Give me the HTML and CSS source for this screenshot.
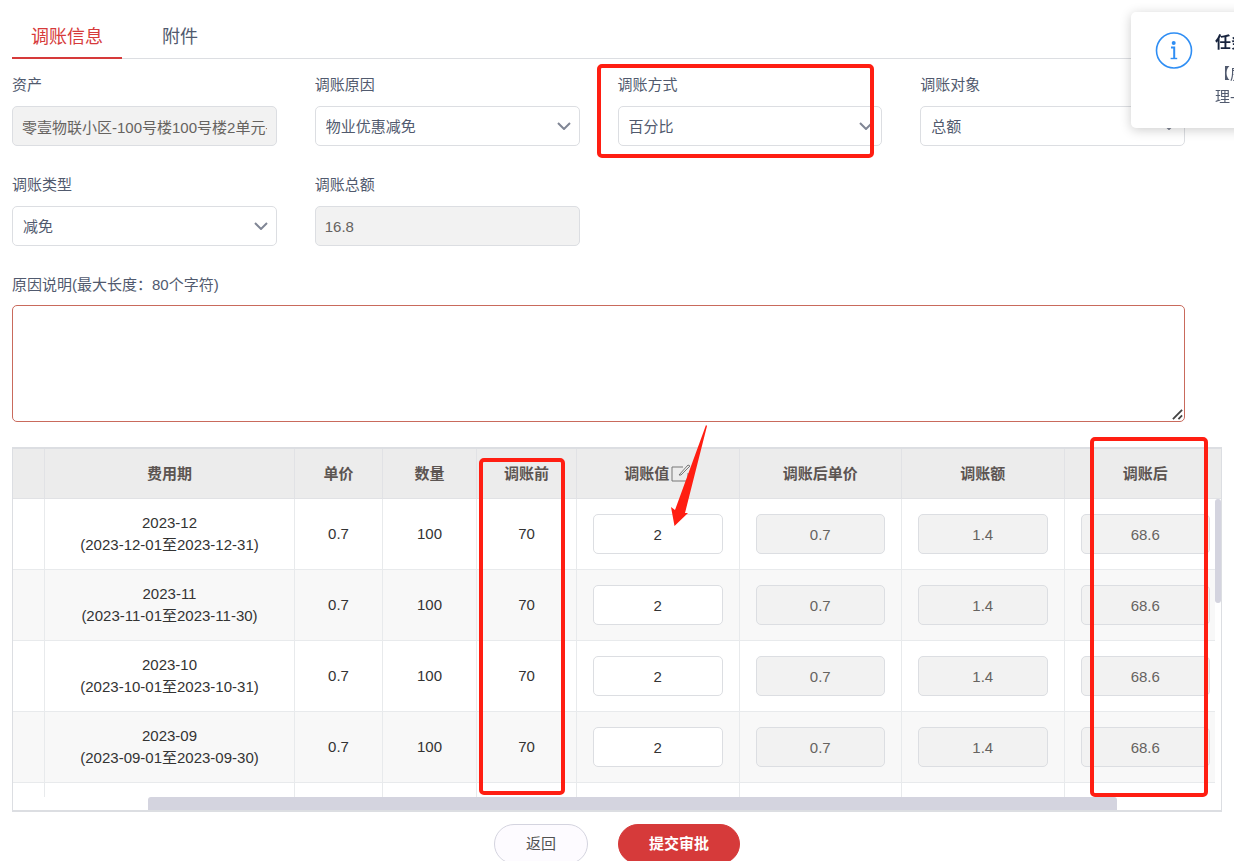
FILE: index.html
```
<!DOCTYPE html>
<html lang="zh-CN">
<head>
  <meta charset="UTF-8">
  <title>调账信息</title>
  <link rel="stylesheet" href="styles.css">
</head>
<body>
  <nav class="tabs">
    <a class="tab active" href="#info">调账信息</a>
    <a class="tab" href="#files">附件</a>
  </nav>

  <form class="form" id="info">
    <div class="field">
      <label for="asset">资产</label>
      <input id="asset" type="text" value="零壹物联小区-100号楼100号楼2单元-101" disabled>
    </div>
    <div class="field">
      <label for="reason">调账原因</label>
      <select id="reason"><option>物业优惠减免</option></select>
    </div>
    <div class="field">
      <label for="mode">调账方式</label>
      <select id="mode"><option>百分比</option></select>
    </div>
    <div class="field">
      <label for="target">调账对象</label>
      <select id="target"><option>总额</option></select>
    </div>
    <div class="field">
      <label for="type">调账类型</label>
      <select id="type"><option>减免</option></select>
    </div>
    <div class="field">
      <label for="total">调账总额</label>
      <input id="total" type="text" value="16.8" disabled>
    </div>
    <div class="field wide">
      <label for="remark">原因说明(最大长度：80个字符)</label>
      <div class="remark">
        <textarea id="remark" maxlength="80"></textarea>
        <svg class="grip" viewBox="0 0 12 12"><path d="M1 11L11 1M7 11L11 7"/></svg>
      </div>
    </div>
  </form>

  <div class="grid">
    <div class="grid-body">
      <table>
        <colgroup>
          <col class="c-check"><col class="c-period"><col class="c-price"><col class="c-count"><col class="c-before">
          <col class="c-input"><col class="c-input"><col class="c-input"><col class="c-input">
        </colgroup>
        <thead>
          <tr>
            <th></th>
            <th>费用期</th>
            <th>单价</th>
            <th>数量</th>
            <th>调账前</th>
            <th>
              <span class="editable">调账值<svg class="edit" viewBox="0 0 20 18"><path d="M12 3H1V17H17V9"/><path d="M8 11L17 1L19 2L10 11Z"/></svg></span>
            </th>
            <th>调账后单价</th>
            <th>调账额</th>
            <th>调账后</th>
          </tr>
        </thead>
        <tbody id="rows"></tbody>
      </table>
    </div>
    <div class="track-y"><div class="thumb-y"></div></div>
    <div class="track-x"><div class="thumb-x"></div></div>
  </div>

  <div class="actions">
    <button class="btn" type="button">返回</button>
    <button class="btn primary" type="button">提交审批</button>
  </div>

  <aside class="notice">
    <svg class="notice-icon" viewBox="0 0 38 38">
      <circle cx="19" cy="18.500" r="17.5" fill="none" stroke="#2f8ef4" stroke-width="1.6"/>
      <circle cx="18.7" cy="11" r="2" fill="#2f8ef4"/>
      <path d="M16 15.500h3.200v10.6" fill="none" stroke="#2f8ef4" stroke-width="2"/>
      <path d="M15.600 26.500h6.600" fill="none" stroke="#2f8ef4" stroke-width="1.4"/>
    </svg>
    <div>
      <h2>任务提醒</h2>
      <p>【房产管理】<br>理-调账</p>
    </div>
  </aside>

  <!-- marks over the page -->
  <svg class="marks" width="1234" height="861">
    <rect x="599" y="66" width="273" height="90" rx="3"/>
    <rect x="481" y="460" width="82" height="333" rx="3"/>
    <rect x="1092" y="439" width="114" height="356" rx="3"/>
    <path d="M706 425L707 426L685 513L688 513L674.500 526L671 507L675 510Z"/>
  </svg>

  <script>
    const rows = [
      ["2023-12", "2023-12-01至2023-12-31"],
      ["2023-11", "2023-11-01至2023-11-30"],
      ["2023-10", "2023-10-01至2023-10-31"],
      ["2023-09", "2023-09-01至2023-09-30"]
    ];

    const blankRow = `<tr>${"<td></td>".repeat(9)}</tr>`;

    document.getElementById("rows").innerHTML = rows.map(([month, range]) => `
      <tr>
        <td></td>
        <td>${month}<br>(${range})</td>
        <td>0.7</td>
        <td>100</td>
        <td>70</td>
        <td><input type="text" value="2" aria-label="${month} 调账值"></td>
        <td><input type="text" value="0.7" aria-label="${month} 调账后单价" disabled></td>
        <td><input type="text" value="1.4" aria-label="${month} 调账额" disabled></td>
        <td><input type="text" value="68.6" aria-label="${month} 调账后" disabled></td>
      </tr>`).join("") + blankRow;
  </script>
</body>
</html>
```

FILE: styles.css
```
* {
  box-sizing: border-box;
}
body {
  margin: 0;
  padding: 12px 12px 0;
  height: 100vh;
  overflow: hidden;
  background-color: #ffffff;
  font-family: "Liberation Sans", "Noto Sans CJK SC", sans-serif;
  font-size: 15px;
  color: #515a6e;
}
.tabs {
  display: flex;
  height: 47px;
  border-bottom: 1px solid #dcdee2;
}
.tab {
  height: 47px;
  padding: 0 20px;
  line-height: 50px;
  font-size: 18px;
  color: #515a6e;
  text-decoration: none;
  white-space: nowrap;
}
.tab.active {
  margin-right: 20px;
  padding: 0 19px;
  border-bottom: 2px solid #d63a3a;
  color: #d63a3a;
}
.form {
  display: grid;
  grid-template-columns: repeat(4, 1fr);
  column-gap: 38px;
  row-gap: 20px;
  padding: 7px 37px 0 0;
}
.field {
  min-width: 0;
}
.wide {
  grid-column: 1 / -1;
}
label {
  display: block;
  height: 40px;
  line-height: 38px;
}
.wide label {
  height: 39px;
}
input,
select,
textarea {
  display: block;
  width: 100%;
  height: 40px;
  margin: 0;
  padding: 0 10px;
  border: 1px solid #dcdee2;
  border-radius: 5px;
  background-color: #ffffff;
  font-family: inherit;
  font-size: 15px;
  color: #515a6e;
}
input:disabled {
  background-color: #f2f2f2;
  color: #666360;
}
.field input {
  padding: 0 9px;
}
select {
  appearance: none;
  background-image: url("data:image/svg+xml,%3Csvg xmlns='http://www.w3.org/2000/svg' width='14' height='8'%3E%3Cpath d='M1 1l6 6 6-6' fill='none' stroke='%23808695' stroke-width='2'/%3E%3C/svg%3E");
  background-repeat: no-repeat;
  background-position: right 8px center;
}
.remark {
  position: relative;
}
textarea {
  height: 117px;
  border-color: #c96a5c;
  resize: none;
}
.grip {
  position: absolute;
  right: 2px;
  bottom: 2px;
  width: 11px;
  height: 11px;
  fill: none;
  stroke: #444444;
  stroke-width: 2;
}
.grid {
  position: relative;
  margin-top: 25px;
  border: 1px solid #dcdee2;
  border-width: 2px 1px;
}
.grid-body {
  height: 348px;
  overflow: hidden;
}
table {
  table-layout: fixed;
  width: calc(100% + 6px);
  border-collapse: separate;
  border-spacing: 0;
}
.c-check { width: 32px; }
.c-period { width: 250px; }
.c-price { width: 88px; }
.c-count { width: 94px; }
.c-before { width: 100px; }
th,
td {
  padding: 0;
  border-right: 1px solid #e8eaec;
  border-bottom: 1px solid #e8eaec;
  text-align: center;
}
th {
  height: 50px;
  padding-bottom: 2px;
  background-color: #ececec;
  border-color: #e1e2e5;
  color: #5c5552;
}
td {
  height: 71px;
  line-height: 22px;
  color: #333333;
}
tbody tr:nth-child(even) td {
  background-color: #f8f8f8;
}
td input {
  width: calc(100% - 32px);
  margin: 0 16px;
  text-align: center;
  color: #333333;
}
.editable {
  display: inline-flex;
  align-items: center;
  gap: 2px;
}
.edit {
  width: 20px;
  height: 18px;
  fill: none;
  stroke: #777777;
  stroke-width: 1;
}
.track-y {
  position: absolute;
  top: 50px;
  right: 0;
  bottom: 0;
  width: 6px;
  background-color: #ffffff;
}
.thumb-y {
  height: 104px;
  border-radius: 3px;
  background-color: #d4d4df;
}
.track-x {
  height: 13px;
  padding: 0 104px 0 135px;
}
.thumb-x {
  height: 13px;
  border-radius: 3px 3px 0 0;
  background-color: #d4d4df;
}
.actions {
  display: flex;
  justify-content: center;
  gap: 30px;
  margin-top: 12px;
}
.btn {
  height: 40px;
  padding: 0 31px 3px;
  border: 1px solid #d4d4df;
  border-radius: 20px;
  background-color: #fdfbff;
  font-family: inherit;
  font-size: 15px;
  color: #515151;
}
.primary {
  padding: 0 30px 3px;
  border-color: #d63a3a;
  background-color: #d63a3a;
  color: #ffffff;
  font-weight: bold;
}
.notice {
  position: fixed;
  top: 12px;
  right: -277px;
  display: flex;
  gap: 22px;
  width: 380px;
  height: 116px;
  padding: 20px 24px;
  border-radius: 5px;
  background-color: #ffffff;
  box-shadow: 0 2px 12px rgba(0, 0, 0, 0.2);
}
.notice-icon {
  flex: none;
  width: 38px;
  height: 38px;
}
.notice h2 {
  margin: 0;
  font-size: 16px;
  line-height: 22px;
  color: #17233d;
}
.notice p {
  margin: 8px 0 0;
  line-height: 23px;
}
.marks {
  position: absolute;
  top: 0;
  left: 0;
  pointer-events: none;
}
.marks rect {
  fill: none;
  stroke: #ff1e12;
  stroke-width: 4;
}
.marks path {
  fill: #ff1e12;
}
```
